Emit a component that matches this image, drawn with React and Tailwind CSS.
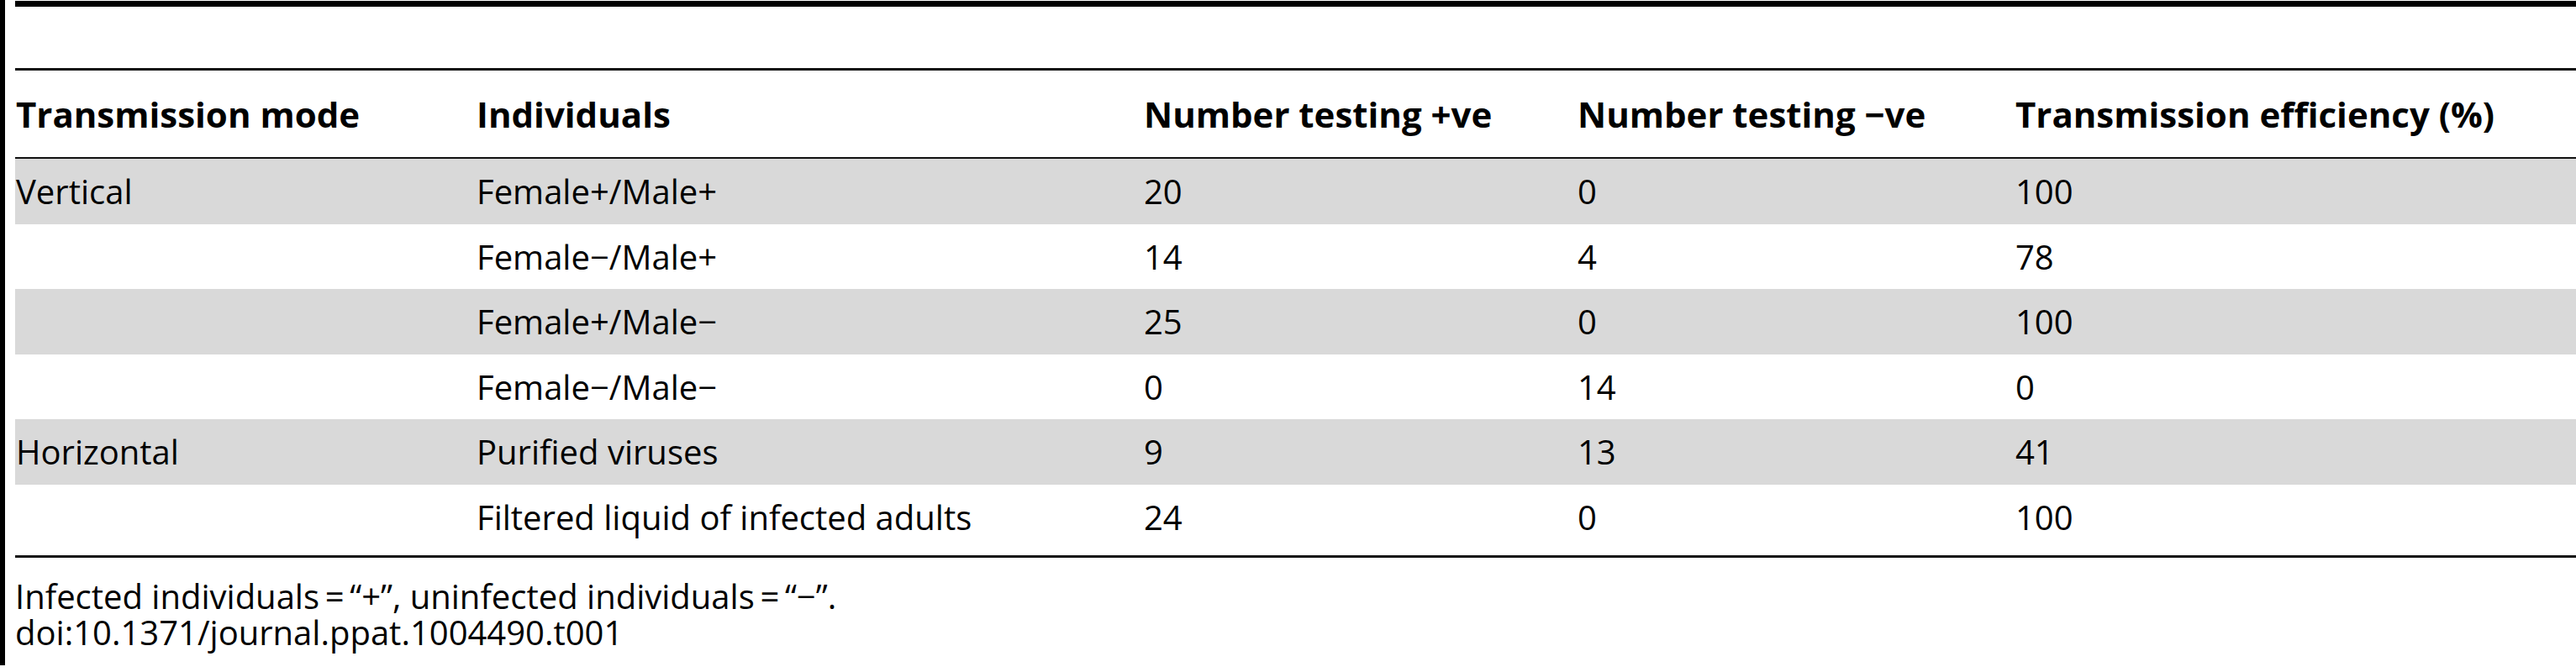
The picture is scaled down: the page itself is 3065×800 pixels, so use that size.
import React from 'react'

const rows = [
  { mode: 'Vertical', who: 'Female+/Male+', pos: '20', neg: '0', eff: '100', h: 'h-[78px]', grey: true },
  { mode: '', who: 'Female\u2212/Male+', pos: '14', neg: '4', eff: '78', h: 'h-[77px]', grey: false },
  { mode: '', who: 'Female+/Male\u2212', pos: '25', neg: '0', eff: '100', h: 'h-[78px]', grey: true },
  { mode: '', who: 'Female\u2212/Male\u2212', pos: '0', neg: '14', eff: '0', h: 'h-[77px]', grey: false },
  { mode: 'Horizontal', who: 'Purified viruses', pos: '9', neg: '13', eff: '41', h: 'h-[78px]', grey: true },
  { mode: '', who: 'Filtered liquid of infected adults', pos: '24', neg: '0', eff: '100', h: 'h-[77px]', grey: false },
]

function Row({ cells, className }) {
  return (
    <div className={'flex items-center whitespace-nowrap ' + className}>
      <div className="w-[549px] pl-[1px]">{cells[0]}</div>
      <div className="w-[794px]">{cells[1]}</div>
      <div className="w-[516px]">{cells[2]}</div>
      <div className="w-[521px]">{cells[3]}</div>
      <div className="flex-1">{cells[4]}</div>
    </div>
  )
}

export default function App() {
  return (
    <div className="flex w-[3065px] h-[800px] bg-white text-black text-[40px] leading-none font-['Open_Sans',sans-serif] overflow-hidden">
      <div className="w-[6px] h-[792px] shrink-0 bg-black" />
      <div className="ml-[12px] flex-1 flex flex-col">
        <div className="mt-[1px] h-[7px] bg-black" />
        <div className="h-[73px]" />
        <div className="h-[3px] bg-[#111]" />
        <Row
          className="h-[103px] font-bold text-[42px]"
          cells={['Transmission mode', 'Individuals', 'Number testing +ve', 'Number testing \u2212ve', 'Transmission efficiency (%)']}
        />
        <div className="h-[2px] bg-[#111]" />
        {rows.map((r, i) => (
          <Row
            key={i}
            className={r.h + (r.grey ? ' bg-[#d9d9d9]' : '')}
            cells={[r.mode, r.who, r.pos, r.neg, r.eff]}
          />
        ))}
        <div className="h-[7px]" />
        <div className="h-[3px] bg-[#111]" />
        <div className="mt-[24px] leading-[43px]">
          <p>Infected individuals{'\u2009'}={'\u2009'}{'\u201c'}+{'\u201d'}, uninfected individuals{'\u2009'}={'\u2009'}{'\u201c'}{'\u2212'}{'\u201d'}.</p>
          <p>doi:10.1371/journal.ppat.1004490.t001</p>
        </div>
      </div>
    </div>
  )
}
